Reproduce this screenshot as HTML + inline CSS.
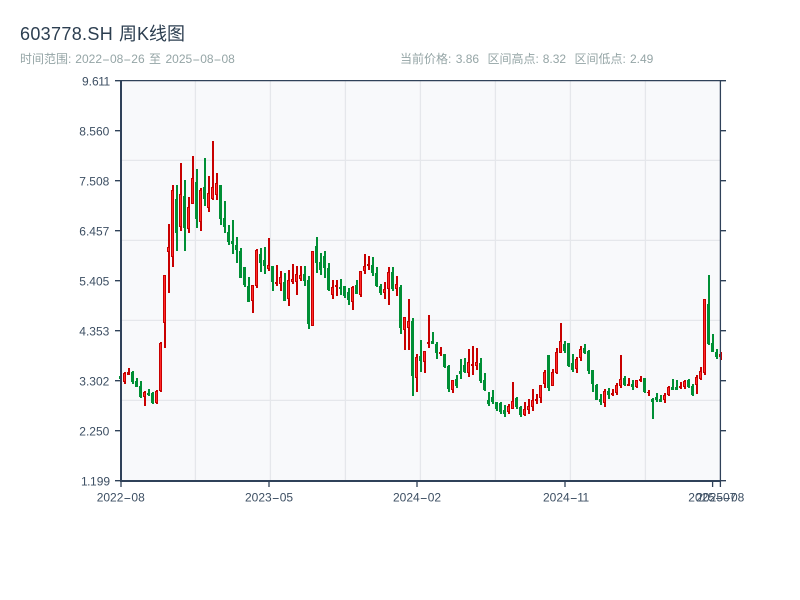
<!DOCTYPE html>
<html><head><meta charset="utf-8"><style>
html,body{margin:0;padding:0;background:#fff;width:800px;height:600px;overflow:hidden}
svg{display:block}
text{font-family:"Liberation Sans","Noto Sans CJK SC",sans-serif}
</style></head><body>
<svg width="800" height="600" viewBox="0 0 800 600" xmlns="http://www.w3.org/2000/svg">
<rect width="800" height="600" fill="#fff"/>
<text x="20" y="40" font-size="18" fill="#2c3e50"><tspan letter-spacing=".33">603778.SH</tspan> <tspan x="119">周K线图</tspan></text>
<g font-size="12" fill="#95a5a6">
<text x="20" y="63">时间范围:</text>
<text x="75.3" y="63">2022</text><text transform="translate(102 63) scale(2 1)">-</text><text x="110" y="63">08</text><text transform="translate(123.3 63) scale(2 1)">-</text><text x="131.3" y="63">26</text>
<text x="149" y="63">至</text>
<text x="165.5" y="63">2025</text><text transform="translate(192.2 63) scale(2 1)">-</text><text x="200.2" y="63">08</text><text transform="translate(213.5 63) scale(2 1)">-</text><text x="221.5" y="63">08</text>
<text x="400" y="63">当前价格:</text><text x="455.7" y="63">3.86</text>
<text x="487.5" y="63">区间高点:</text><text x="542.7" y="63">8.32</text>
<text x="574.5" y="63">区间低点:</text><text x="630" y="63">2.49</text>
</g>
<rect x="121" y="81" width="600" height="400" fill="#f8f9fb"/>
<path fill="none" stroke="#e5e7eb" stroke-width="1.3" d="M121 160.4H721M121 240.4H721M121 320.4H721M121 400.4H721M195.4 81V481M270.4 81V481M345.4 81V481M420.4 81V481M495.4 81V481M570.4 81V481M645.4 81V481"/>
<path fill="none" stroke="#008f35" stroke-width="2" d="M133 371V384M137 378V387M141 381V398M149 389V396M153 392V404M177 185V251M185 180V251M197 169V228M205 158V206M221 185V225M225 201V233M229 225V245M233 220V254M237 237V263M241 248V278M245 267V287M249 277V302M261 248V272M265 247V274M273 266V291M285 273V301M305 266V286M309 276V329M317 237V273M321 253V275M325 251V278M329 263V291M341 279V295M345 286V298M349 288V305M357 280V294M373 257V276M377 267V287M381 284V295M393 267V291M401 285V334M413 318V396M421 340V372M433 332V344M437 342V359M445 354V368M449 365V392M457 375V388M461 359V379M465 358V373M481 358V383M485 373V391M489 392V406M493 390V404M497 402V411M501 402V414M505 405V417M517 397V409M521 406V417M549 355V391M565 341V353M569 343V367M573 354V372M585 344V354M589 350V374M593 370V392M597 384V400M601 394V405M609 388V399M625 376V386M633 380V390M645 378V393M653 398V419M657 393V402M661 395V402M673 379V390M677 380V390M689 379V388M693 384V396M709 275V345M713 334V352M717 349V359"/>
<path fill="none" stroke="#008f35" stroke-width="3" transform="translate(-.5 0)" d="M121 376V379M133 372V382M137 381V387M141 386V397M149 393V395M153 393V403M177 199V233M185 196V228M197 182V219M205 187V199M221 185V219M225 218V227M229 232V242M233 241V244M237 245V250M241 251V278M245 267V285M249 286V302M261 254V263M265 260V266M273 266V282M285 282V301M305 274V281M309 280V324M317 246V263M321 262V270M325 256V268M329 268V290M341 287V289M345 286V296M349 292V300M357 285V294M373 265V273M377 273V286M381 286V293M393 272V289M401 287V328M413 321V376M421 356V361M433 341V344M437 344V353M445 354V367M449 366V389M457 379V386M461 371V374M465 365V372M481 363V381M485 380V390M489 400V404M493 397V402M497 402V409M501 403V412M505 410V414M517 398V407M521 407V415M549 355V388M565 344V351M569 343V366M573 363V370M585 348V353M589 351V371M593 370V384M597 385V400M601 399V402M609 391V395M625 378V385M633 384V387M645 378V392M653 399V402M657 397V400M661 399V402M673 387V390M677 387V390M689 380V387M693 386V395M709 304V344M713 343V352M717 352V357"/>
<path fill="none" stroke="#c80000" stroke-width="2" d="M125 372V384M129 368V375M145 391V406M157 390V404M161 342V392M165 275V348M169 224V293M173 185V267M181 163V231M189 197V233M193 156V204M201 188V231M209 176V212M213 141V200M217 173V200M253 285V313M257 249V288M269 238V271M277 265V286M281 271V291M289 270V306M293 264V284M297 266V295M301 266V281M313 251V326M333 280V299M337 280V296M353 286V310M361 271V297M365 254V274M369 256V270M385 282V299M389 267V305M397 276V296M405 317V350M409 299V350M417 354V392M425 351V373M429 315V348M441 347V356M453 380V393M469 349V377M473 346V375M477 348V370M509 404V414M513 382V409M525 402V416M529 399V414M533 389V411M537 394V404M541 385V403M545 370V388M553 369V386M557 348V374M561 323V353M577 357V373M581 346V361M605 389V407M613 389V396M617 383V395M621 355V388M629 378V386M637 380V388M641 376V382M649 390V396M665 393V403M669 386V396M681 382V389M685 380V389M697 375V394M701 367V380M705 299V375M721 352V360"/>
<path fill="none" stroke="#c80000" stroke-width="3" transform="translate(-.5 0)" d="M125 373V382M129 372V375M145 392V397M157 391V403M161 343V391M165 275V323M169 247V252M173 190V257M181 194V227M189 207V229M193 178V204M201 190V222M209 193V208M213 187V199M217 183V195M253 285V301M257 250V286M269 265V269M277 282V284M281 277V284M289 280V299M293 279V282M297 274V282M301 275V279M313 251V326M333 287V295M337 285V287M353 287V302M361 271V295M365 266V271M369 264V266M385 289V293M389 272V289M397 284V289M405 317V330M409 321V328M417 357V378M425 351V362M429 342V344M441 352V354M453 380V390M469 362V373M473 364V366M477 362V366M509 406V412M513 401V409M525 409V415M529 406V410M533 400V407M537 399V401M541 385V398M545 372V384M553 372V386M557 352V373M561 341V353M577 359V369M581 349V358M605 391V403M613 393V395M617 385V393M621 379V386M629 384V386M637 380V387M641 379V381M649 392V393M665 395V400M669 387V395M681 386V388M685 381V387M697 377V385M701 371V379M705 299V373M721 354V357"/>
<path fill="none" stroke="#ff2a2a" stroke-width="1" transform="translate(-.5 0)" d="M125 374V381M145 393V396M157 392V402M161 344V390M165 276V322M169 248V251M173 191V256M181 195V226M189 208V228M193 179V203M201 191V221M209 194V207M213 188V198M217 184V194M253 286V300M257 251V285M269 266V268M281 278V283M289 281V298M293 280V281M297 275V281M301 276V278M313 252V325M333 288V294M353 288V301M361 272V294M365 267V270M385 290V292M389 273V288M397 285V288M405 318V329M409 322V327M417 358V377M425 352V361M453 381V389M469 363V372M477 363V365M509 407V411M513 402V408M525 410V414M529 407V409M533 401V406M541 386V397M545 373V383M553 373V385M557 353V372M561 342V352M577 360V368M581 350V357M605 392V402M617 386V392M621 380V385M637 381V386M665 396V399M669 388V394M685 382V386M697 378V384M701 372V378M705 300V372M721 355V356"/>
<path fill="none" stroke="#2f4159" stroke-width="1.3" d="M120 80.6H721M720.4 80V481M115 80.7H120M115 130.7H120M115 180.7H120M115 230.7H120M115 280.7H120M115 330.7H120M115 380.7H120M115 430.7H120M115 480.7H120M721 80.7H726M721 130.7H726M721 180.7H726M721 230.7H726M721 280.7H726M721 330.7H726M721 380.7H726M721 430.7H726M721 480.7H726M121 482V487M269 482V487M417 482V487M565 482V487M712.6 482V487M720.4 482V487"/>
<path fill="none" stroke="#2f4159" stroke-width="2" d="M121 80V482M120 481H721"/>
<g font-size="12" fill="#3d4f63">
<text x="82" y="85.5">9.6<tspan dx="-.4">1</tspan><tspan dx="-.6">1</tspan></text>
<text x="79.3" y="135.5">8.560</text>
<text x="79.3" y="185.5">7.508</text>
<text x="79.3" y="235.5">6.457</text>
<text x="79.3" y="285.5">5.405</text>
<text x="79.3" y="335.5">4.353</text>
<text x="79.3" y="385.5">3.302</text>
<text x="79.3" y="435.5">2.250</text>
<text x="81" y="485.5">1<tspan dx="-.6">.</tspan><tspan dx="-.4">1</tspan>99</text>

<text x="96.7" y="501.5">2022</text><text transform="translate(123.4 501.5) scale(2 1)">-</text><text x="131.4" y="501.5">08</text>
<text x="245" y="501.5">2023</text><text transform="translate(271.7 501.5) scale(2 1)">-</text><text x="279.7" y="501.5">05</text>
<text x="393" y="501.5">2024</text><text transform="translate(419.7 501.5) scale(2 1)">-</text><text x="427.7" y="501.5">02</text>
<text x="543" y="501.5">2024</text><text transform="translate(569.7 501.5) scale(2 1)">-</text><text x="577.2" y="501.5">1<tspan dx="-.5">1</tspan></text>
<text x="688.3" y="501.5">2025</text><text transform="translate(715 501.5) scale(2 1)">-</text><text x="723" y="501.5">07</text>
<text x="696.3" y="501.5">2025</text><text transform="translate(723 501.5) scale(2 1)">-</text><text x="731" y="501.5">08</text>
</g>
</svg>
</body></html>
